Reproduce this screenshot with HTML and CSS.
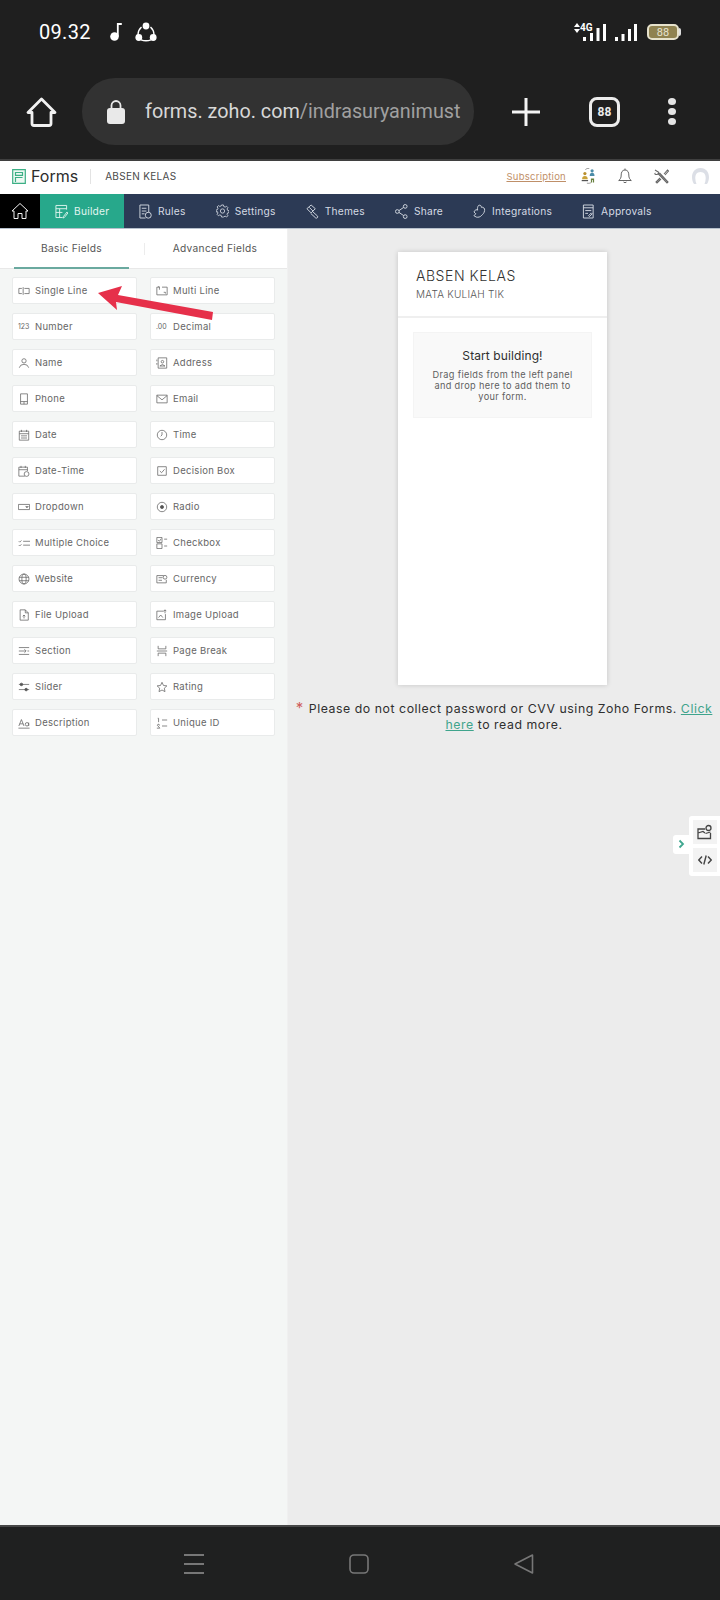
FILE: index.html
```html
<!DOCTYPE html>
<html lang="id">
<head>
<meta charset="utf-8">
<title>Zoho Forms</title>
<link rel="stylesheet" href="styles.css">
</head>
<body>
<div class="phone">
  <div class="status">
    <div class="status-left">
      <span class="clock">09.32</span>
      <svg class="ic-note" width="12" height="18" viewBox="0 0 12 18"><circle cx="4.500" cy="13.500" r="4.300" fill="#fff"/><path d="M7.800 13.500V1h4" fill="none" stroke="#fff" stroke-width="1.800"/></svg>
      <svg class="ic-share" width="22" height="20" viewBox="0 0 22 20"><path d="M6.500 5Q2.800 8.500 3 13M15.500 5Q19.200 8.500 19 13M6 17.800Q11 19.800 16 17.800" fill="none" stroke="#fff" stroke-width="1.400"/><circle cx="11" cy="4" r="3.400" fill="#fff"/><circle cx="3.800" cy="15.500" r="3.400" fill="#fff"/><circle cx="18.200" cy="15.500" r="3.400" fill="#fff"/></svg>
    </div>
    <div class="status-right">
      <svg class="net" width="6" height="10" viewBox="0 0 6 10"><path d="M3 0 6 4H0ZM3 10 0 6h6Z" fill="#fff"/></svg>
      <span class="net-4g">4G</span>
      <svg width="23" height="17" viewBox="0 0 23 17"><path d="M0 13h3v4H0zM7 9h3v8H7zM13.500 4h3v13h-3zM20 0h3v17h-3z" fill="#fff"/></svg>
      <svg class="sig2" width="22" height="17" viewBox="0 0 22 17"><path d="M0 13h3v4H0zM6.500 10h3v7h-3zM13 5h3v12h-3zM19 0h3v17h-3z" fill="#fff"/></svg>
      <div class="battery"><span class="batt-fill">88</span></div><span class="batt-cap"></span>
    </div>
  </div>
  <div class="browser">
    <svg class="br-home" width="31" height="30" viewBox="0 0 31 30"><path d="M15.500 2 2 15.500h4v11a2 2 0 0 0 2 2h15a2 2 0 0 0 2-2v-11h4Z" fill="none" stroke="#f1f1f1" stroke-width="2.800" stroke-linejoin="round"/></svg>
    <div class="url">
      <svg class="lock" width="18" height="24" viewBox="0 0 18 24"><rect y="8" width="18" height="16" rx="3" fill="#e9e9e9"/><path d="M4.500 9V5.500a4.500 4.500 0 0 1 9 0V9" fill="none" stroke="#e9e9e9" stroke-width="1.800"/></svg>
      <span class="url-text"><span class="url-host">forms. zoho. com</span><span class="url-path">/indrasuryanimust</span></span>
    </div>
    <svg class="br-plus" width="28" height="28" viewBox="0 0 28 28"><path d="M14 0v28M0 14h28" stroke="#f4f4f4" stroke-width="3"/></svg>
    <div class="tabs-count">88</div>
    <div class="dots"><i></i><i></i><i></i></div>
  </div>
  <div class="app">
    <header class="topbar">
      <div class="brand">
        <svg width="14" height="15" viewBox="0 0 14 15"><path d="M.7.700h12.600v13.600H.7z" fill="#eef9f3" stroke="#3caf85" stroke-width="1.200"/><path d="M3.500 3.500h7v2.800h-7zM10.500 8.500h-7V13" fill="none" stroke="#3caf85" stroke-width="1.200"/></svg>
        <span class="brand-name">Forms</span>
        <span class="brand-sep"></span>
        <span class="brand-form">ABSEN KELAS</span>
      </div>
      <div class="top-actions">
        <a class="subs">Subscription</a>
        <svg class="ta-people" width="17" height="16" viewBox="0 0 20 20"><circle cx="5.500" cy="7" r="2" fill="#b98f2e"/><path d="M2 14q0-4 3.500-4T9 14z" fill="#c9a23a"/><path d="M1.500 15h8v1.500h-8z" fill="#555"/><circle cx="14.500" cy="3.500" r="2" fill="#4b8ca8"/><path d="M11.500 10q0-4 3-4t3 4z" fill="#4b8ca8"/><path d="M13 13h4v5h-1.500v-3H14.500v3H13z" fill="#67803f"/><path d="M6 2q2-2 5-1.500M8 19q3 .5 5-.5" fill="none" stroke="#666" stroke-width=".8"/></svg>
        <svg class="ta-bell" width="14" height="16" viewBox="0 0 14 16"><path d="M7 .5v1.500M7 2C4 2 3.200 4.500 3.200 7c0 3-1 4.300-2.500 5.500h12.600c-1.500-1.200-2.500-2.500-2.500-5.500 0-2.500-.8-5-3.800-5ZM5.500 14q1.500 1.500 3 0" fill="none" stroke="#555" stroke-width=".9"/></svg>
        <svg class="ta-tools" width="15" height="15" viewBox="0 0 15 15"><path d="M5 3.500a2.800 2.800 0 0 1-3.800 1.800L.8 4a3 3 0 0 0 .2 .3M5 3.500 1 1M4.500 5 13 14l1-1L5.500 4M10 5l3.500-4 1 1L11 6M6 9l-4 4 1 1 4-4" fill="none" stroke="#666" stroke-width="1.100"/></svg>
        <svg class="ta-user" width="19" height="16" viewBox="0 0 19 16"><path d="M3 16C-1 10 1 0 9.500 0S20 10 16 16h-2.500c2-5 2-12-4-12S3.500 11 5.500 16Z" fill="#dcdfe6"/></svg>
      </div>
    </header>
    <nav class="nav">
      <div class="nav-home"><svg width="18" height="18" viewBox="0 0 18 18"><path d="M9 1.500 1 9h2v7.500h4v-5h4v5h4V9h2Z" fill="none" stroke="#f2f2f2" stroke-width="1"/></svg></div>
      <div class="nav-item active"><svg width="13" height="15" viewBox="0 0 14 16"><path d="M12.500 6V1.500H1v13h7M1 5h11.500M1 9h7M5 5v9.500M9 13.500l4-5 1 1-4 5-1.500.5Z" fill="none" stroke="#dff5ee" stroke-width="1"/></svg><span>Builder</span></div>
      <div class="nav-item"><svg width="13" height="15" viewBox="0 0 14 16"><path d="M1 1h9.500v8M1 1v14h6M3 4.500h5M3 7.500h5M3 10.500h3" fill="none" stroke="#d6dbe4" stroke-width="1"/><circle cx="10" cy="12" r="3.200" fill="none" stroke="#d6dbe4"/></svg><span>Rules</span></div>
      <div class="nav-item"><svg width="13" height="14" viewBox="0 0 14 14"><path d="M6 .5h2l.4 1.700 1.500.6 1.500-.9 1.400 1.400-.9 1.500.6 1.500 1.500.4v2l-1.500.4-.6 1.500.9 1.500-1.400 1.400-1.500-.9-1.500.6L8 13.500H6l-.4-1.700-1.500-.6-1.500.9-1.400-1.400.9-1.500-.6-1.500L0 8V6l1.500-.4.600-1.500-.9-1.500 1.400-1.400 1.500.9 1.500-.6Z" fill="none" stroke="#d6dbe4" stroke-width=".9"/><circle cx="7" cy="7" r="2.300" fill="none" stroke="#d6dbe4" stroke-width=".9"/></svg><span>Settings</span></div>
      <div class="nav-item"><svg width="13" height="15" viewBox="0 0 14 16"><path d="M1 5 5.500 1 10 5 5.500 9.500ZM7 8l5.500 5a1.500 1.500 0 0 1-2 2L5 10M3.500 3.500l4 4" fill="none" stroke="#d6dbe4" stroke-width="1"/></svg><span>Themes</span></div>
      <div class="nav-item"><svg width="13" height="15" viewBox="0 0 14 16"><circle cx="2.500" cy="8" r="2" fill="none" stroke="#d6dbe4"/><circle cx="11" cy="2.500" r="2" fill="none" stroke="#d6dbe4"/><circle cx="11" cy="13.500" r="2" fill="none" stroke="#d6dbe4"/><path d="M4.300 7 9.300 3.600M4.300 9 9.300 12.400" stroke="#d6dbe4"/></svg><span>Share</span></div>
      <div class="nav-item"><svg width="13" height="15" viewBox="0 0 14 16"><path d="M6 1.500c2-1 3 .5 3 2 2-.5 4 1 3.500 3.500-.5 3-2 4-3 5-1.500 2-4 2.500-6 2L1 12.500l2-2-2-2L3 6l2 .5C4.500 4.500 5 2.500 6 1.500Z" fill="none" stroke="#d6dbe4"/></svg><span>Integrations</span></div>
      <div class="nav-item"><svg width="13" height="15" viewBox="0 0 14 16"><path d="M1.500 1h10.500v14H1.500zM1.500 4h10.500M3.500 7h6.500M3.500 10h3M7 12.500l3-3 1 1-3 3Z" fill="none" stroke="#d6dbe4"/></svg><span>Approvals</span></div>
    </nav>
    <div class="workspace">
      <aside class="sidebar">
        <div class="tabs">
          <div class="tab on">Basic Fields</div>
          <div class="tab">Advanced Fields</div>
        </div>
        <div class="fields">
          <div class="field"><svg viewBox="0 0 14 14"><path d="M4.500 4H1v6h3.500M7.500 4H13v6H7.500M6 2.500v9" /></svg><span>Single Line</span></div>
          <div class="field"><svg viewBox="0 0 14 14"><path d="M4 2.500H1v9h12v-9h-6M3 2.500v-1M9 8.500h2V10M4 5.500V2"/></svg><span>Multi Line</span></div>
          <div class="field"><span class="glyph">123</span><span>Number</span></div>
          <div class="field"><span class="glyph">.00</span><span>Decimal</span></div>
          <div class="field"><svg viewBox="0 0 14 14"><circle cx="7" cy="4.500" r="2.500"/><path d="M1.500 12.500q1-4 5.500-4t5.500 4"/></svg><span>Name</span></div>
          <div class="field"><svg viewBox="0 0 14 14"><path d="M2.500 1h10v12h-10zM1 3v2M1 7v2"/><circle cx="7.500" cy="5.500" r="1.500"/><path d="M4.500 10.500q3-3.500 6 0z"/></svg><span>Address</span></div>
          <div class="field"><svg viewBox="0 0 14 14"><path d="M3 1h8v12H3zM3 10h8M7 10v3"/></svg><span>Phone</span></div>
          <div class="field"><svg viewBox="0 0 14 14"><path d="M1 2.500h12v9H1zM1 3l6 5 6-5"/></svg><span>Email</span></div>
          <div class="field"><svg viewBox="0 0 14 14"><path d="M1.500 2.500h11v10.500h-11zM1.500 5.500h11M4 1v2.500M10 1v2.500M3.500 8h7M3.500 10.500h7"/></svg><span>Date</span></div>
          <div class="field"><svg viewBox="0 0 14 14"><circle cx="7" cy="7" r="5.500"/><path d="M7 3.500V7l-1.500 1.500"/></svg><span>Time</span></div>
          <div class="field"><svg viewBox="0 0 14 14"><path d="M8 13H1V2.500h10V7M1 5.500h10M3.500 1v2.500M8.500 1v2.500"/><circle cx="10" cy="10.500" r="2.800"/></svg><span>Date-Time</span></div>
          <div class="field"><svg viewBox="0 0 14 14"><path d="M2 2h10v10H2zM4.500 7l2 2 3.500-4"/></svg><span>Decision Box</span></div>
          <div class="field"><svg viewBox="0 0 14 14"><path d="M.5 4h13v6H.500zM9 6.500h3l-1.500 1.500z"/></svg><span>Dropdown</span></div>
          <div class="field"><svg viewBox="0 0 14 14"><circle cx="7" cy="7" r="5.500"/><circle class="fill" cx="7" cy="7" r="1.800"/></svg><span>Radio</span></div>
          <div class="field"><svg viewBox="0 0 14 14"><path d="M1 5l1 1 2-2M1 9.500l1 1 2-2M6 5h8M6 9.500h8"/></svg><span>Multiple Choice</span></div>
          <div class="field"><svg viewBox="0 0 14 14"><path d="M1 .5h6v6H1zM1 8h6v5.500H1zM9.500 2.500H13M9.500 10.500H13M2.500 3.500l1.500 1.500 2-3"/></svg><span>Checkbox</span></div>
          <div class="field"><svg viewBox="0 0 14 14"><circle cx="7" cy="7" r="5.800"/><ellipse cx="7" cy="7" rx="2.500" ry="5.800"/><path d="M1.300 5h11.400M1.300 9h11.400"/></svg><span>Website</span></div>
          <div class="field"><svg viewBox="0 0 14 14"><path d="M9 3H1v8.500h11V8M3 5.500h4.500M3 8.500h4"/><circle cx="10.500" cy="5" r="2.200"/></svg><span>Currency</span></div>
          <div class="field"><svg viewBox="0 0 14 14"><path d="M2.500 1h6l3.500 3.500V13h-9.500zM8.500 1v3.500H12M7 11V7M5.500 8.500 7 7l1.500 1.500"/></svg><span>File Upload</span></div>
          <div class="field"><svg viewBox="0 0 14 14"><path d="M9 2.500H1v10h10V6M3 10l2.500-3L8 10M10.500 5V1M9 2.500l1.500-1.500 1.500 1.500"/></svg><span>Image Upload</span></div>
          <div class="field"><svg viewBox="0 0 14 14"><path d="M1 3h12M1 11h12M1 7h8M7.500 5l2 2-2 2M11 7h2"/></svg><span>Section</span></div>
          <div class="field"><svg viewBox="0 0 14 14"><path d="M1 7h12M2.500 1v3.500h9V1M2.500 13V9.500h9V13"/></svg><span>Page Break</span></div>
          <div class="field"><svg viewBox="0 0 14 14"><path d="M1 4h12M1 10h12"/><circle class="fill" cx="4" cy="4" r="1.500"/><circle class="fill" cx="9.500" cy="10" r="1.500"/></svg><span>Slider</span></div>
          <div class="field"><svg viewBox="0 0 14 14"><path d="M7 1.500 8.700 5.200l4 .5-3 2.700.8 4L7 10.500l-3.500 1.900.8-4-3-2.700 4-.5Z"/></svg><span>Rating</span></div>
          <div class="field"><svg viewBox="0 0 14 14"><path d="M.5 13h13M1 10.500 4 3l3 7.500M2 8h4M12.500 6.500v4M12.500 8.500a2 2 0 1 1-4 0 2 2 0 1 1 4 0"/></svg><span>Description</span></div>
          <div class="field"><svg viewBox="0 0 14 14"><path d="M2 1.500h1V6M1 13h3.500L1.500 9.500q.5-1.500 2-1 1 .5.500 1.500M7 3.500h6M7 10.500h6"/></svg><span>Unique ID</span></div>
        </div>
      </aside>
      <main class="canvas">
        <section class="card">
          <div class="card-head">
            <h1>ABSEN KELAS</h1>
            <p>MATA KULIAH TIK</p>
          </div>
          <div class="card-body">
            <div class="drop">
              <h2>Start building!</h2>
              <p>Drag fields from the left panel and drop here to add them to your form.</p>
            </div>
          </div>
        </section>
        <p class="note"><span class="star">*</span> Please do not collect password or CVV using Zoho Forms. <a>Click</a> <a>here</a> to read more.</p>
        <div class="side-tool">
          <div class="tool-chev"><svg width="7" height="10" viewBox="0 0 7 10"><path d="M1.500 1.500 5 5 1.500 8.500" fill="none" stroke="#3fa78f" stroke-width="1.800"/></svg></div>
          <div class="tool-box">
            <div class="tool-btn"><svg width="16" height="16" viewBox="0 0 16 16"><path d="M8 5H1v9.500h12.500V9M1 9l5-1.500L8 9M13.500 8l-5 1.500" fill="none" stroke="#444" stroke-width="1.300"/><circle cx="11.500" cy="4" r="2.500" fill="none" stroke="#444" stroke-width="1.300"/></svg></div>
            <div class="tool-btn"><svg width="14" height="10" viewBox="0 0 14 10"><path d="M4 1.500.8 5 4 8.500M10 1.500 13.200 5 10 8.500M8.200 .5 5.800 9.500" fill="none" stroke="#444" stroke-width="1.400"/></svg></div>
          </div>
        </div>
      </main>
      <svg class="arrow" width="116" height="34" viewBox="0 0 116 34"><path d="M0 7 24 0 20 9 115 26 114 34 18 16 19 24Z" fill="#e6304a"/></svg>
    </div>
  </div>
  <div class="sysnav">
    <svg width="20" height="20" viewBox="0 0 20 20"><path d="M0 1h20M0 10h20M0 19h20" stroke="#777" stroke-width="1.800"/></svg>
    <svg width="20" height="20" viewBox="0 0 20 20"><rect x="1" y="1" width="18" height="18" rx="4" fill="none" stroke="#777" stroke-width="1.600"/></svg>
    <svg width="20" height="20" viewBox="0 0 20 20"><path d="M18.500 1v18L1 10Z" fill="none" stroke="#777" stroke-width="1.600" stroke-linejoin="round"/></svg>
  </div>
</div>
</body>
</html>
```

FILE: styles.css
```css
* { box-sizing: border-box; }
html, body { margin: 0; padding: 0; }
body { font-family: Inter, "Liberation Sans", sans-serif; background: #1f2020; }
.phone { width: 720px; height: 1600px; display: flex; flex-direction: column; overflow: hidden; }

.status { height: 64px; background: #1f1f1f; display: flex; justify-content: space-between; align-items: center; padding: 0 39px 0 39px; flex: none; }
.status-left { display: flex; align-items: center; }
.clock { color: #fff; font: 400 20px Roboto, sans-serif; letter-spacing: .3px; }
.ic-note { margin-left: 19px; }
.ic-share { margin-left: 13px; }
.status-right { display: flex; align-items: center; color: #fff; }
.net { margin-bottom: 9px; flex: none; }
.net-4g { font: 700 10px Roboto, sans-serif; margin-bottom: 9px; margin-right: -10px; width: 13px; }
.sig2 { margin-left: 9px; }
.battery { width: 32px; height: 16px; margin-left: 10px; border: 2px solid #e6e2cc; border-radius: 5px; background: #8f8250; display: flex; align-items: center; justify-content: center; }
.batt-fill { color: #e8e4d0; font: 400 11px Roboto, sans-serif; }
.batt-cap { width: 2px; height: 8px; background: #ddd; border-radius: 0 2px 2px 0; }

.browser { height: 95px; background: #1f1f1f; display: flex; align-items: center; padding: 0 0 0 26px; flex: none; }
.br-home { flex: none; }
.url { width: 392px; height: 67px; margin-left: 25px; border-radius: 33px; background: #323232; display: flex; align-items: center; padding: 0 10px 0 25px; gap: 20px; overflow: hidden; flex: none; }
.lock { flex: none; margin-top: 1px; }
.url-text { font: 400 19.800px Roboto, sans-serif; white-space: nowrap; }
.url-host { color: #d8d8d8; }
.url-path { color: #a0a0a0; }
.br-plus { margin-left: 38px; flex: none; }
.tabs-count { width: 31px; height: 30px; margin-left: 49px; flex: none; border: 3px solid #ececec; border-radius: 8px; color: #ececec; font: 700 12px/24px Roboto, sans-serif; text-align: center; }
.dots { margin-left: 48px; display: flex; flex-direction: column; gap: 3px; flex: none; }
.dots i { width: 8px; height: 7px; border-radius: 50%; background: #e4e4e4; display: block; }

.app { flex: 1; display: flex; flex-direction: column; border-top: 2px solid #3f3f3f; border-bottom: 2px solid #474747; min-height: 0; }
.topbar { height: 33px; background: #fff; display: flex; justify-content: space-between; align-items: center; padding: 0 10px 3px 12px; flex: none; }
.brand { display: flex; align-items: center; }
.brand-name { font-size: 16px; color: #2c2c2c; margin-left: 5px; }
.brand-sep { width: 1px; height: 15px; background: #e3e3e3; margin: 0 14px 0 12px; }
.brand-form { font-size: 10px; color: #4a4a4a; letter-spacing: .3px; }
.top-actions { display: flex; align-items: center; }
.subs { color: #bf8f68; font-size: 9.500px; text-decoration: underline; letter-spacing: .25px; }
.ta-people { margin-left: 14px; }
.ta-bell { margin-left: 21px; }
.ta-tools { margin-left: 22px; }
.ta-user { margin-left: 22px; }

.nav { height: 35px; background: #2c3a55; border-bottom: 1px solid #b6c0cc; display: flex; flex: none; color: #d6dbe4; font-size: 10.200px; letter-spacing: .25px; }
.nav-home { width: 40px; background: #000; display: flex; align-items: center; justify-content: center; flex: none; }
.nav-item { display: flex; align-items: center; gap: 6px; margin-left: 30px; white-space: nowrap; }
.nav-item svg { flex: none; }
.nav-item.active { background: #27a88b; color: #e2f5f0; width: 84px; margin: 0 -15px 0 0; padding-left: 15px; }

.workspace { flex: 1; display: flex; min-height: 0; position: relative; }
.sidebar { width: 288px; flex: none; background: #f4f6f5; border-right: 1px solid #f0f0f0; }
.tabs { height: 40px; background: #fff; display: flex; padding-left: 14px; border-bottom: 1px solid #e8e8e8; }
.tab { font-size: 10.200px; color: #555; letter-spacing: .3px; line-height: 39px; text-align: center; }
.tab.on { width: 115px; height: 40px; border-bottom: 2px solid #6aa99f; }
.tab:not(.on) { margin-left: 29px; width: 114px; position: relative; }
.tab:not(.on)::before { content: ""; position: absolute; left: -14px; top: 14px; width: 1px; height: 12px; background: #ececec; }
.fields { display: grid; grid-template-columns: 125px 125px; column-gap: 13px; row-gap: 9px; padding: 8px 0 0 12px; }
.field { height: 27px; background: #fff; border: 1px solid #e9ebeb; border-radius: 2px; display: flex; align-items: center; padding-left: 5px; gap: 5px; font-size: 9.500px; color: #666; letter-spacing: .3px; white-space: nowrap; }
.field svg { width: 12px; height: 12px; flex: none; fill: none; stroke: #666; stroke-width: .9; }
.field svg .fill { fill: #555; stroke: #555; }
.glyph { width: 12px; font-size: 7px; flex: none; letter-spacing: 0; color: #666; white-space: nowrap; }

.canvas { flex: 1; background: #ececec; position: relative; display: flex; flex-direction: column; min-width: 0; }
.card { width: 209px; height: 433px; margin: 23px 0 0 110px; background: #fff; box-shadow: 0 0 5px rgba(0,0,0,.17); flex: none; }
.card-head { height: 66px; border-bottom: 2px solid #efefef; padding: 15px 0 0 18px; }
.card-head h1 { margin: 0; font-size: 14px; font-weight: 300; color: #333; letter-spacing: .55px; line-height: 17px; }
.card-head p { margin: 4px 0 0; font-size: 10px; font-weight: 300; color: #555; letter-spacing: .25px; line-height: 12px; }
.card-body { padding: 14px 15px 0; }
.drop { height: 86px; background: #f9f9f9; border: 1px solid #f4f4f4; text-align: center; padding: 15px 15px 0; }
.drop h2 { margin: 0 0 5px; font-size: 12px; font-weight: 400; color: #2f2f2f; line-height: 16px; letter-spacing: .1px; }
.drop p { margin: 0; font-size: 9.200px; line-height: 11px; color: #5f5f5f; letter-spacing: .35px; }
.note { margin: 15px 6px 0; text-align: center; font-size: 12.300px; line-height: 16px; letter-spacing: .55px; color: #2f2f2f; }
.note .star { color: #cf5d5d; font-size: 15px; line-height: 1; margin-right: 1px; }
.note a { color: #3fa48c; text-decoration: underline; }
.side-tool { position: absolute; right: 0; top: 587px; display: flex; align-items: center; }
.tool-chev { width: 16px; height: 19px; background: #fff; border-radius: 3px 0 0 3px; display: flex; align-items: center; justify-content: center; margin-bottom: 4px; }
.tool-box { width: 31px; background: #fff; padding: 4px 0 4px 4px; border-radius: 3px 0 0 3px; display: flex; flex-direction: column; gap: 4px; }
.tool-btn { width: 24px; height: 24px; background: #f3f3f3; display: flex; align-items: center; justify-content: center; }
.arrow { position: absolute; left: 98px; top: 57px; }

.sysnav { height: 73px; background: #1f2020; display: flex; align-items: center; gap: 145px; padding: 0 0 0 184px; flex: none; }
```
